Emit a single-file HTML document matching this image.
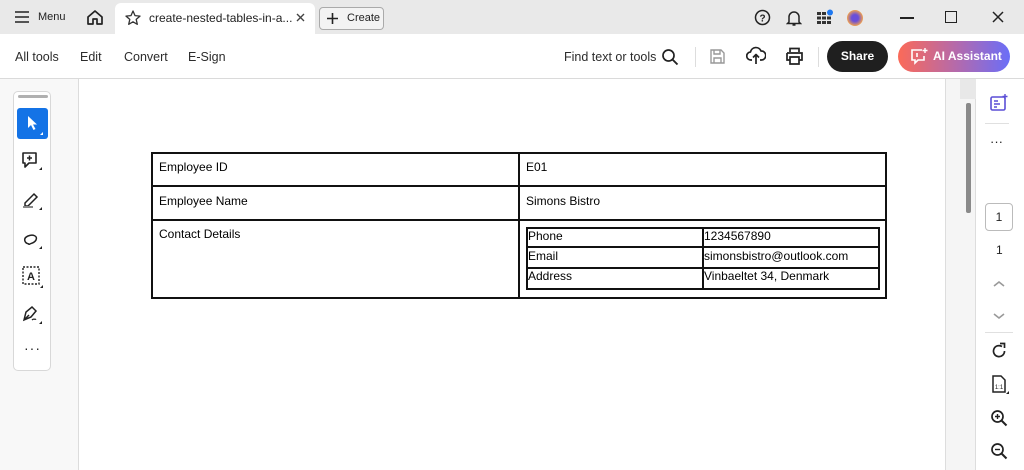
<!DOCTYPE html>
<html><head><style>
*{margin:0;padding:0;box-sizing:border-box}
body{width:1024px;height:470px;overflow:hidden;background:#fff;font-family:"Liberation Sans",sans-serif;position:relative;color:#222}
.a{position:absolute}
.t{font-size:12px;color:#222}
.tb{font-size:12.5px;color:#2c2c2c}
.cell{position:absolute;font-size:12px;color:#000}
</style></head><body>
<div class="a" style="left:0;top:0;width:1024px;height:34px;background:#e9e9e9"></div>
<div class="a" style="left:115px;top:3px;width:200px;height:31px;background:#fff;border-radius:6px 6px 0 0"></div>
<svg class="a" style="left:14px;top:10px" width="16" height="14"><path d="M1 2h14M1 7h14M1 12h14" stroke="#222" stroke-width="1.6"/></svg>
<div class="a t" style="left:38px;top:11px;font-size:11px">Menu</div>
<svg class="a" style="left:86px;top:9px" width="18" height="17"><path d="M2 8L9 2l7 6v7h-5v-5H7v5H2z" fill="none" stroke="#222" stroke-width="1.7" stroke-linejoin="round"/></svg>
<svg class="a" style="left:125px;top:10px" width="16" height="15"><path d="M8 1l2 4.6 5 .5-3.8 3.3 1.1 4.9L8 11.8 3.7 14.3l1.1-4.9L1 6.1l5-.5z" fill="none" stroke="#333" stroke-width="1.3" stroke-linejoin="round"/></svg>
<div class="a t" style="left:149px;top:11px;font-size:12px">create-nested-tables-in-a...</div>
<svg class="a" style="left:296px;top:13px" width="9" height="9"><path d="M1 1l7 7M8 1L1 8" stroke="#444" stroke-width="1.4"/></svg>
<div class="a" style="left:319px;top:7px;width:65px;height:23px;border:1px solid #aaa;border-radius:4px;background:#f3f3f3"></div>
<svg class="a" style="left:327px;top:13px" width="11" height="11"><path d="M5.5 0v11M0 5.5h11" stroke="#222" stroke-width="1.6"/></svg>
<div class="a t" style="left:347px;top:12px;font-size:11px">Create</div>
<svg class="a" style="left:754px;top:9px" width="17" height="17"><circle cx="8.5" cy="8.5" r="7" fill="none" stroke="#222" stroke-width="1.5"/><text x="8.5" y="12.5" font-size="10" font-weight="bold" text-anchor="middle" fill="#222" font-family="Liberation Sans">?</text></svg>
<svg class="a" style="left:786px;top:9px" width="16" height="18"><path d="M3 13V8a5 5 0 0110 0v5l1.5 1.5h-13z M6.5 16h3" fill="none" stroke="#222" stroke-width="1.5"/></svg>
<svg class="a" style="left:816px;top:9px" width="18" height="17"><g fill="#333"><rect x="1" y="3" width="4" height="3"/><rect x="6" y="3" width="4" height="3"/><rect x="1" y="7.5" width="4" height="3"/><rect x="6" y="7.5" width="4" height="3"/><rect x="11" y="7.5" width="4" height="3"/><rect x="1" y="12" width="4" height="3"/><rect x="6" y="12" width="4" height="3"/><rect x="11" y="12" width="4" height="3"/></g><circle cx="14" cy="3.5" r="3" fill="#1e78f0"/></svg>
<div class="a" style="left:847px;top:10px;width:16px;height:16px;border-radius:50%;background:radial-gradient(circle at 50% 50%,#6a4fd8 30%,#f0a050 70%)"></div>
<div class="a" style="left:900px;top:17px;width:14px;height:1.5px;background:#222"></div>
<div class="a" style="left:945px;top:11px;width:12px;height:12px;border:1.4px solid #222"></div>
<svg class="a" style="left:992px;top:11px" width="12" height="12"><path d="M1 1l10 10M11 1L1 11" stroke="#222" stroke-width="1.5"/></svg>
<div class="a" style="left:0;top:78px;width:1024px;height:1px;background:#dadada"></div>
<div class="a tb" style="left:15px;top:50px">All tools</div>
<div class="a tb" style="left:80px;top:50px">Edit</div>
<div class="a tb" style="left:124px;top:50px">Convert</div>
<div class="a tb" style="left:188px;top:50px">E-Sign</div>
<div class="a tb" style="left:564px;top:50px">Find text or tools</div>
<svg class="a" style="left:661px;top:48px" width="18" height="18"><circle cx="7.5" cy="7.5" r="5.5" fill="none" stroke="#222" stroke-width="1.7"/><path d="M11.5 11.5l5 5" stroke="#222" stroke-width="1.9"/></svg>
<div class="a" style="left:695px;top:47px;width:1px;height:20px;background:#ddd"></div>
<svg class="a" style="left:709px;top:48px" width="17" height="17"><path d="M2 2h10l3 3v10H2z M5 2v4h6V2 M5 15v-5h7v5" fill="none" stroke="#999" stroke-width="1.4"/></svg>
<svg class="a" style="left:746px;top:46px" width="20" height="20"><path d="M6 14H5a4 4 0 01-.5-8A5.5 5.5 0 0115 5a4.2 4.2 0 01.5 9H14 M10 18V9 M7 11.5l3-3 3 3" fill="none" stroke="#222" stroke-width="1.7" stroke-linejoin="round"/></svg>
<svg class="a" style="left:785px;top:47px" width="19" height="18"><path d="M5 5V1.5h9V5 M2 6h15v7h-3 M5 13H2V6 M5 10h9v7H5z" fill="none" stroke="#222" stroke-width="1.7"/></svg>
<div class="a" style="left:818px;top:47px;width:1px;height:20px;background:#ddd"></div>
<div class="a" style="left:827px;top:41px;width:61px;height:31px;border-radius:16px;background:#1f1f1f;color:#fff;font-size:12px;font-weight:bold;text-align:center;line-height:31px">Share</div>
<div class="a" style="left:898px;top:41px;width:112px;height:31px;border-radius:16px;background:linear-gradient(90deg,#fb6a58,#b06ab0 55%,#6a6ef8);color:#fff;font-size:12px;font-weight:bold;line-height:31px;padding-left:35px">AI Assistant</div>
<svg class="a" style="left:909px;top:47px" width="20" height="19"><path d="M13 3H3v10h3v3l3-3h6V9" fill="none" stroke="#fff" stroke-width="1.6"/><path d="M16 1v5M13.5 3.5h5" stroke="#fff" stroke-width="1.4"/><path d="M8 6v4" stroke="#fff" stroke-width="1.6"/></svg>
<div class="a" style="left:0;top:79px;width:79px;height:391px;background:#f8f8f8;border-right:1px solid #dcdcdc"></div>
<div class="a" style="left:13px;top:91px;width:38px;height:280px;background:#fff;border:1px solid #d8d8d8;border-radius:5px"></div>
<div class="a" style="left:18px;top:95px;width:30px;height:3px;background:#b0b0b0;border-radius:2px"></div>
<div class="a" style="left:17px;top:108px;width:31px;height:31px;background:#1473e6;border-radius:3px"></div>
<svg class="a" style="left:17px;top:108px" width="31" height="31"><path d="M11 8v12l3-3 2.5 5 2-1-2.5-4.5h4z" fill="#fff"/><path d="M26 24v3h-3z" fill="#fff"/></svg>
<svg class="a" style="left:20px;top:150px" width="26" height="22"><path d="M3 3h13v10H9l-4 4v-4H3z" fill="none" stroke="#222" stroke-width="1.6" stroke-linejoin="round"/><path d="M9.5 5.5v5M7 8h5" stroke="#222" stroke-width="1.5"/><path d="M22 17v3h-3z" fill="#222"/></svg>
<svg class="a" style="left:20px;top:188px" width="26" height="24"><path d="M5 15l9-9 3 3-9 9H5z" fill="none" stroke="#222" stroke-width="1.5"/><path d="M3 19h10" stroke="#888" stroke-width="2"/><path d="M22 19v3h-3z" fill="#222"/></svg>
<svg class="a" style="left:20px;top:227px" width="26" height="24"><path d="M9 17c-5-1-6-6-1-8s10 0 8 4-7 3-7 5" fill="none" stroke="#222" stroke-width="1.5"/><path d="M22 19v3h-3z" fill="#222"/></svg>
<svg class="a" style="left:20px;top:264px" width="26" height="26"><rect x="3" y="3" width="16" height="17" fill="none" stroke="#222" stroke-width="1.4" stroke-dasharray="2 1.5"/><text x="11" y="16" font-size="11" font-weight="bold" text-anchor="middle" font-family="Liberation Sans" fill="#222">A</text><path d="M23 21v3h-3z" fill="#222"/></svg>
<svg class="a" style="left:20px;top:303px" width="26" height="24"><path d="M4 17l2-8 6-5 4 4-5 6z M4 17l5-5" fill="none" stroke="#222" stroke-width="1.5"/><path d="M12 17c2-2 3 0 4-1" stroke="#222" stroke-width="1.3" fill="none"/><path d="M22 18v3h-3z" fill="#222"/></svg>
<div class="a" style="left:24px;top:340px;font-size:14px;letter-spacing:1px;color:#222">···</div>
<div class="a" style="left:945px;top:79px;width:1px;height:391px;background:#ddd"></div>
<div class="a" style="left:946px;top:79px;width:30px;height:391px;background:#f5f5f5;border-right:1px solid #ddd"></div>
<div class="a" style="left:960px;top:79px;width:16px;height:20px;background:#e8e8e8"></div>
<div class="a" style="left:966px;top:103px;width:5px;height:110px;background:#8a8a8a;border-radius:2px"></div>
<svg class="a" style="left:989px;top:93px" width="20" height="20"><rect x="2" y="4" width="14" height="13" rx="1.5" fill="none" stroke="#5b4fd6" stroke-width="1.6"/><path d="M5 8h4M5 11h6M5 14h3" stroke="#5b4fd6" stroke-width="1.5"/><path d="M16 1v5M13.5 3.5h5" stroke="#5b4fd6" stroke-width="1.4"/></svg>
<div class="a" style="left:985px;top:123px;width:24px;height:1px;background:#e0e0e0"></div>
<div class="a" style="left:990px;top:134px;font-size:13px;color:#222">···</div>
<div class="a" style="left:985px;top:203px;width:28px;height:28px;border:1px solid #bbb;border-radius:4px;font-size:12px;text-align:center;line-height:26px">1</div>
<div class="a" style="left:996px;top:243px;font-size:12px">1</div>
<svg class="a" style="left:992px;top:279px" width="14" height="10"><path d="M2 7l5-4 5 4" fill="none" stroke="#999" stroke-width="1.6"/></svg>
<svg class="a" style="left:992px;top:311px" width="14" height="10"><path d="M2 3l5 4 5-4" fill="none" stroke="#999" stroke-width="1.6"/></svg>
<div class="a" style="left:985px;top:332px;width:28px;height:1px;background:#e0e0e0"></div>
<svg class="a" style="left:990px;top:342px" width="18" height="18"><path d="M14.5 9A5.5 5.5 0 1112 4.5" fill="none" stroke="#222" stroke-width="1.7"/><path d="M10 1.5h4.5V6" fill="none" stroke="#222" stroke-width="1.7"/></svg>
<svg class="a" style="left:990px;top:374px" width="20" height="22"><path d="M3 2h8l4 4v12H3z" fill="none" stroke="#222" stroke-width="1.5"/><text x="9" y="15" font-size="6" text-anchor="middle" font-family="Liberation Sans" fill="#222">1:1</text><path d="M19 17v3h-3z" fill="#222"/></svg>
<svg class="a" style="left:990px;top:409px" width="18" height="18"><circle cx="7.5" cy="7.5" r="5.5" fill="none" stroke="#222" stroke-width="1.7"/><path d="M11.5 11.5l5 5" stroke="#222" stroke-width="2"/><path d="M5 7.5h5M7.5 5v5" stroke="#222" stroke-width="1.4"/></svg>
<svg class="a" style="left:990px;top:442px" width="18" height="18"><circle cx="7.5" cy="7.5" r="5.5" fill="none" stroke="#222" stroke-width="1.7"/><path d="M11.5 11.5l5 5" stroke="#222" stroke-width="2"/><path d="M5 7.5h5" stroke="#222" stroke-width="1.4"/></svg>
<div class="a" style="left:151px;top:152px;width:736px;height:147px;border:2px solid #111"></div>
<div class="a" style="left:518px;top:152px;width:2px;height:147px;background:#111"></div>
<div class="a" style="left:151px;top:185px;width:736px;height:2px;background:#111"></div>
<div class="a" style="left:151px;top:219px;width:736px;height:2px;background:#111"></div>
<div class="cell" style="left:159px;top:160px">Employee ID</div>
<div class="cell" style="left:526px;top:160px">E01</div>
<div class="cell" style="left:159px;top:194px">Employee Name</div>
<div class="cell" style="left:526px;top:194px">Simons Bistro</div>
<div class="cell" style="left:159px;top:227px">Contact Details</div>
<div class="a" style="left:526px;top:227px;width:354px;height:63px;border:2px solid #111"></div>
<div class="a" style="left:702px;top:227px;width:2px;height:63px;background:#111"></div>
<div class="a" style="left:526px;top:246px;width:354px;height:2px;background:#111"></div>
<div class="a" style="left:526px;top:267px;width:354px;height:2px;background:#111"></div>
<div class="cell" style="left:528px;top:229px">Phone</div>
<div class="cell" style="left:704px;top:229px">1234567890</div>
<div class="cell" style="left:528px;top:249px">Email</div>
<div class="cell" style="left:704px;top:249px">simonsbistro@outlook.com</div>
<div class="cell" style="left:528px;top:269px">Address</div>
<div class="cell" style="left:704px;top:269px">Vinbaeltet 34, Denmark</div>
</body></html>
